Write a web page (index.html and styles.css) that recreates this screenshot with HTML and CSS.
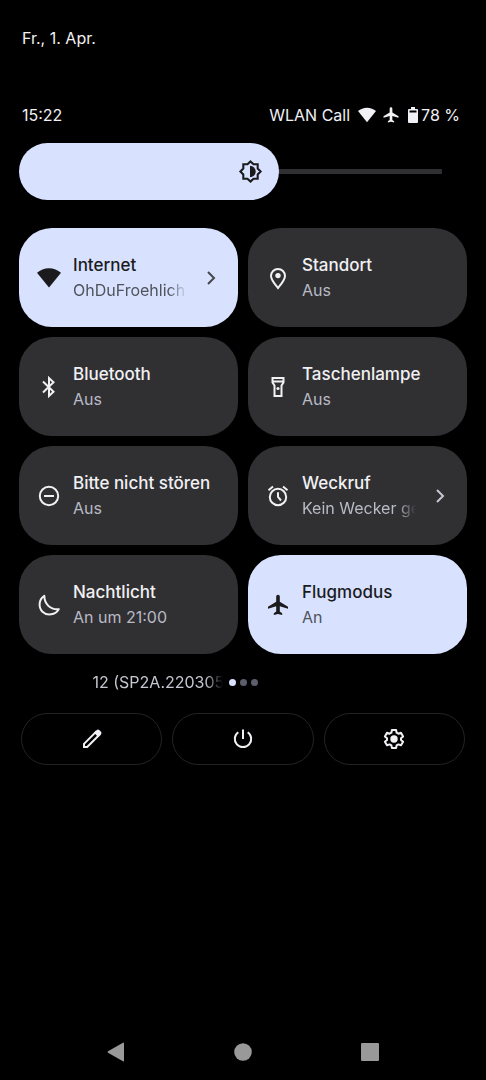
FILE: index.html
```html
<!DOCTYPE html>
<html lang="de">
<head>
<meta charset="utf-8">
<meta name="viewport" content="width=device-width, initial-scale=1">
<title>Schnelleinstellungen</title>
<link rel="stylesheet" href="styles.css">
</head>
<body>
<svg class="sprite" aria-hidden="true">
  <symbol id="wifi" viewBox="0 0 24 24"><path d="M12 21.500 0 6.800C3.200 3.900 7.400 2.200 12 2.200s8.800 1.700 12 4.600z"/></symbol>
  <symbol id="plane" viewBox="0 0 24 24"><path d="M22 15.800v-2L13.800 8.800V3.500a1.700 1.700 0 0 0-3.600 0v5.300L2 13.800v2l8.200-2.500V18.500L7.800 20.300v1.700L12 21l4.200 1v-1.700l-2.400-1.800V13.300z"/></symbol>
</svg>

<main class="shade">
  <p class="date">Fr., 1. Apr.</p>

  <header class="status">
    <time class="clock">15:22</time>
    <span class="carrier">WLAN Call</span>
    <svg class="status-wifi"><use href="#wifi"/></svg>
    <svg class="status-plane"><use href="#plane"/></svg>
    <svg class="status-battery" viewBox="0 0 10 16"><path d="M3 0h4v2h2a1 1 0 0 1 1 1v12a1 1 0 0 1-1 1H1a1 1 0 0 1-1-1V3a1 1 0 0 1 1-1h2zM1.500 3.500V5.500h7v-2z" fill-rule="evenodd"/></svg>
    <span>78 %</span>
  </header>

  <div class="brightness">
    <input class="slider" type="range" min="0" max="1000" value="555" aria-label="Helligkeit">
    <svg class="slider-icon" viewBox="0 0 24 24"><path d="M12 2.300 14.900 5.100H18.900V9.100L21.700 12l-2.800 2.900v4h-4L12 21.700 9.100 18.900h-4v-4L2.300 12l2.800-2.900v-4h4z" fill="none" stroke="currentColor" stroke-width="2"/><path d="M11.500 6.500a5.500 5.500 0 0 1 0 11z"/></svg>
  </div>

  <section class="tiles">
    <button class="tile active" type="button">
      <svg class="icon"><use href="#wifi"/></svg>
      <span class="label"><span class="name">Internet</span><span class="state fade">OhDuFroehlich</span></span>
      <svg class="chevron" viewBox="0 0 24 24"><path d="m9 6 6 6-6 6"/></svg>
    </button>
    <button class="tile" type="button">
      <svg class="icon" viewBox="0 0 24 24"><path class="line" d="M12 22c-3.500-4.300-7-8.100-7-12a7 7 0 0 1 14 0c0 3.900-3.500 7.700-7 12z"/><circle cx="12" cy="9.600" r="2.700"/></svg>
      <span class="label"><span class="name">Standort</span><span class="state">Aus</span></span>
    </button>
    <button class="tile" type="button">
      <svg class="icon" viewBox="0 0 24 24"><path class="line" d="m6 6.500 10.500 10.200L12 21V3l4.500 4.300L6 17.500"/></svg>
      <span class="label"><span class="name">Bluetooth</span><span class="state">Aus</span></span>
    </button>
    <button class="tile" type="button">
      <svg class="icon" viewBox="0 0 24 24"><path class="line" d="M6.500 3h11v4.500l-2 3V21h-7V10.500l-2-3zM6.500 6.500h11"/><circle cx="12" cy="13.500" r="1.600"/></svg>
      <span class="label"><span class="name">Taschenlampe</span><span class="state">Aus</span></span>
    </button>
    <button class="tile" type="button">
      <svg class="icon" viewBox="0 0 24 24"><circle class="line" cx="12" cy="12" r="9.200"/><path class="line" d="M7 12h10"/></svg>
      <span class="label"><span class="name">Bitte nicht stören</span><span class="state">Aus</span></span>
    </button>
    <button class="tile" type="button">
      <svg class="icon" viewBox="0 0 24 24"><circle class="line" cx="12" cy="13" r="8.200"/><path class="line" d="M12 8.200V13l3 3.500M2.500 6.200 7 2.500M21.500 6.200 17 2.500"/></svg>
      <span class="label"><span class="name">Weckruf</span><span class="state fade">Kein Wecker ge</span></span>
      <svg class="chevron" viewBox="0 0 24 24"><path d="m9 6 6 6-6 6"/></svg>
    </button>
    <button class="tile" type="button">
      <svg class="icon" viewBox="0 0 24 24"><path class="line" stroke-linejoin="round" d="M7.300 2.800C1.500 6.500 1.300 14.500 5.500 18.700c4.800 4.600 12.800 3.300 16.300-2.500C13 17 7.500 11 7.300 2.800z"/></svg>
      <span class="label"><span class="name">Nachtlicht</span><span class="state">An um 21:00</span></span>
    </button>
    <button class="tile active" type="button">
      <svg class="icon"><use href="#plane"/></svg>
      <span class="label"><span class="name">Flugmodus</span><span class="state">An</span></span>
    </button>
  </section>

  <div class="pager">
    <span class="build fade">12 (SP2A.220305</span>
    <span class="dots"><i class="dot current"></i><i class="dot"></i><i class="dot"></i></span>
  </div>

  <div class="actions">
    <button class="action" type="button" aria-label="Bearbeiten"><svg class="icon" viewBox="0 0 24 24"><path class="line" d="M4 20v-3.200L16 4.800l3.200 3.200L7.200 20z"/><path d="m14 5.800 2.800-2.800q1.200-1 2.400 0l1.800 1.800q1 1.200 0 2.400L18.200 10z"/></svg></button>
    <button class="action" type="button" aria-label="Ein/Aus"><svg class="icon" viewBox="0 0 24 24"><path class="line" d="M12 2.500V12M7.300 5.200a8.200 8.200 0 1 0 9.400 0"/></svg></button>
    <button class="action" type="button" aria-label="Einstellungen"><svg class="icon" viewBox="0 0 24 24"><path class="line" stroke-linejoin="round" d="m9.900 3h4.200l.5 2.700 1.800 1 2.600-.9 2.100 3.600-2.100 1.800v1.700l2.100 1.800-2.100 3.600-2.600-.9-1.800 1-.5 2.700H9.900l-.5-2.700-1.800-1-2.600.9-2.100-3.600L5 12.900v-1.700L2.900 9.400 5 5.800l2.600.9 1.800-1z"/><circle cx="12" cy="12" r="3.700"/></svg></button>
  </div>

  <nav class="navbar" aria-label="Navigation">
    <button class="nav" type="button" aria-label="Zurück"><svg viewBox="0 0 20 20"><path d="M18 1.200v17.600q0 1-1 .5L2 10.700q-1-.7 0-1.400L17 .7q1-.5 1 .5z"/></svg></button>
    <button class="nav" type="button" aria-label="Startbildschirm"><svg viewBox="0 0 20 20"><circle cx="10" cy="10" r="8.800"/></svg></button>
    <button class="nav" type="button" aria-label="Übersicht"><svg viewBox="0 0 20 20"><rect x="1" y="1" width="18" height="18" rx="1"/></svg></button>
  </nav>
</main>
</body>
</html>
```
FILE: styles.css
```css
* { box-sizing: border-box; }

body {
  margin: 0;
  background: #000;
  color: #f1f0f4;
  font: 16px/24px Inter, Roboto, sans-serif;
}

button {
  border: 0;
  padding: 0;
  background: none;
  color: inherit;
  font: inherit;
  text-align: left;
}

svg { display: block; flex: none; fill: currentColor; }

.sprite { position: absolute; width: 0; height: 0; }

.shade {
  display: flex;
  flex-direction: column;
  min-height: 100vh;
  padding: 26px 19px 18px;
}

.date { margin: 0 3px 53px; }

.status {
  display: flex;
  align-items: center;
  margin: 0 7px 16px 3px;
}
.clock { flex: 1; }
.status-wifi { width: 18px; height: 18px; margin-left: 8px; }
.status-plane { width: 18px; height: 18px; margin-left: 6px; }
.status-battery { width: 10px; height: 16px; margin: 0 3px 0 8px; }

.brightness {
  --size: 57px;
  --level: 0.555;
  position: relative;
  margin: 0 25px 28px 0;
}
.slider {
  appearance: none;
  display: block;
  width: 100%;
  height: var(--size);
  margin: 0;
  border-radius: 29px;
  background:
    linear-gradient(#d8e2ff, #d8e2ff) left / calc((100% - var(--size)) * var(--level) + 28px) 100% no-repeat,
    linear-gradient(#303032, #303032) center / 100% 5px no-repeat;
}
.slider::-webkit-slider-thumb {
  appearance: none;
  width: var(--size);
  height: var(--size);
  border-radius: 50%;
  background: #d8e2ff;
}
.slider-icon {
  position: absolute;
  top: 16px;
  left: calc((100% - var(--size)) * var(--level) + 16px);
  width: 25px;
  height: 25px;
  color: #1b1b1d;
  pointer-events: none;
}

.tiles {
  display: grid;
  grid-template-columns: repeat(2, minmax(0, 1fr));
  gap: 10px;
}
.tile {
  display: flex;
  align-items: center;
  gap: 12px;
  min-height: 99px;
  padding: 0 15px 0 18px;
  border-radius: 33px;
  background: #303032;
}
.active { background: #d8e2ff; color: #1b1b1d; }

.icon { width: 24px; height: 24px; }
.line { fill: none; stroke: currentColor; stroke-width: 2; }
.chevron {
  width: 24px;
  height: 24px;
  fill: none;
  stroke: #c5c6d0;
  stroke-width: 2;
}
.active .chevron { stroke: #45464c; }

.label { flex: 1; min-width: 0; }
.name, .state { display: block; line-height: 25px; white-space: nowrap; }
.name { font-size: 17px; font-weight: 500; }
.state { color: #b9bac6; }
.active .state { color: #50535c; }

.fade {
  white-space: nowrap;
  mask-image: linear-gradient(to left, transparent, #000 18px);
}

.pager {
  display: grid;
  grid-template-columns: 1fr auto 1fr;
  align-items: center;
  gap: 6px;
  margin: 16px 0 19px;
}
.build { justify-self: end; width: 130px; color: #c5c6d0; }
.dots { display: flex; grid-column: 2; gap: 4px; }
.dot { width: 7px; height: 7px; border-radius: 50%; background: #5c5f6b; }
.current { background: #d8e2ff; }

.actions {
  display: grid;
  grid-template-columns: repeat(3, 1fr);
  gap: 10px;
  margin: 0 2px;
}
.action {
  display: grid;
  place-items: center;
  height: 52px;
  border: 1px solid #232325;
  border-radius: 26px;
}

.navbar {
  display: grid;
  grid-template-columns: repeat(3, 127px);
  justify-content: center;
  margin-top: auto;
}
.nav { display: grid; place-items: center; color: #999; }
.nav svg { width: 20px; height: 20px; }
```
